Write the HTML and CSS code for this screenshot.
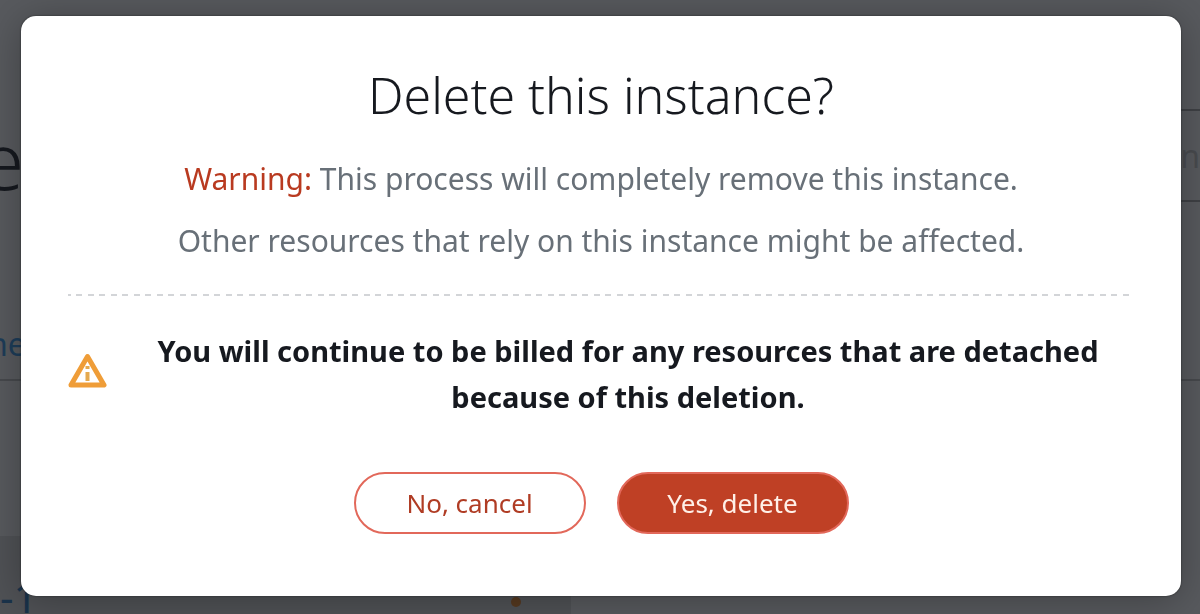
FILE: index.html
```
<!DOCTYPE html>
<html lang="en">
<head>
<meta charset="utf-8">
<title>Delete this instance?</title>
<link rel="stylesheet" href="styles.css">
</head>
<body>

<div class="page" aria-hidden="true">
  <div class="page-header">
    <span class="page-title">e</span>
    <span class="page-action">on</span>
  </div>
  <div class="page-tabs"><span>ne</span></div>
  <div class="page-space"></div>
  <div class="page-panel">
    <span class="page-count">-1</span>
    <i class="status-dot"></i>
  </div>
</div>

<div class="overlay">
  <div class="modal" role="dialog" aria-modal="true" aria-labelledby="modal-title">
    <h1 id="modal-title">Delete this instance?</h1>
    <p class="text"><span class="warning">Warning:</span> This process will completely remove this instance.</p>
    <p class="text">Other resources that rely on this instance might be affected.</p>

    <svg class="divider" aria-hidden="true"><line x1="0" y1="1" x2="100%" y2="1"/></svg>

    <div class="notice">
      <svg class="notice-icon" viewBox="0 0 40 38" aria-hidden="true">
        <path d="M19.500 4.500 L36 33 H3 Z"/>
        <rect x="17.500" y="14" width="4" height="3"/>
        <rect x="17.500" y="20" width="4" height="9"/>
      </svg>
      <p>You will continue to be billed for any resources that are detached because of this deletion.</p>
    </div>

    <div class="buttons">
      <button type="button" class="button">No, cancel</button>
      <button type="button" class="button button-danger">Yes, delete</button>
    </div>
  </div>
</div>

</body>
</html>
```

FILE: styles.css
```
* {
  box-sizing: border-box;
}

body {
  margin: 0;
  background: #585a5e;
  font-family: "Noto Sans", "Open Sans", sans-serif;
  color: #16191f;
}

h1, p {
  margin: 0;
}

/* page behind the dialog */
.page {
  height: 100vh;
  overflow: hidden;
}

.page-header {
  display: flex;
  justify-content: space-between;
  align-items: center;
  margin-top: 109px;
  height: 93px;
}

.page-title {
  margin-left: -20px;
  padding-top: 6px;
  font-size: 80px;
  font-weight: 300;
  line-height: 92px;
}

.page-action {
  width: 400px;
  border: 2px solid #3f4145;
  border-right: 0;
  color: #494b4f;
  font-size: 32px;
  line-height: 89px;
  text-align: right;
}

.page-tabs {
  height: 179px;
  padding-top: 120px;
  border-bottom: 2px solid #47494d;
  color: #1d3d59;
  font-size: 32px;
  line-height: 44px;
}

.page-tabs span {
  margin-left: -12px;
}

.page-space {
  height: 155px;
}

.page-panel {
  display: flex;
  justify-content: space-between;
  align-items: center;
  width: 571px;
  height: 132px;
  padding-right: 50px;
  background: #505256;
  color: #1a334b;
}

.page-count {
  padding-bottom: 12px;
  font-size: 42px;
}

.status-dot {
  width: 10px;
  height: 10px;
  border-radius: 50%;
  background: #573a20;
}

/* dialog */
.overlay {
  position: fixed;
  inset: 0;
  padding: 16px 19px 18px 21px;
}

.modal {
  padding: 43px 47px 62px;
  border-radius: 15px;
  background: #fff;
  box-shadow: 0 0 2px #202224, 0 4px 40px rgba(0, 0, 0, 0.3);
  text-align: center;
}

h1 {
  margin-bottom: 25px;
  font-size: 50px;
  font-weight: 300;
  line-height: 72px;
}

.text {
  margin-bottom: 16px;
  color: #687078;
  font-size: 30px;
  line-height: 46px;
}

.warning {
  color: #b93a20;
}

.divider {
  display: block;
  width: 100%;
  height: 2px;
  margin-top: 30px;
}

.divider line {
  stroke: #d3d5d8;
  stroke-width: 2;
  stroke-dasharray: 6 5 6 6;
  stroke-dashoffset: 3;
}

.notice {
  display: flex;
  align-items: flex-start;
  margin-top: 32px;
}

.notice-icon {
  flex: none;
  width: 40px;
  height: 38px;
  margin-top: 24px;
}

.notice-icon path {
  fill: none;
  stroke: #ef9d38;
  stroke-width: 5;
  stroke-linejoin: round;
}

.notice-icon rect {
  fill: #e5a94f;
}

.notice p {
  flex: 1;
  padding: 0 32px 0 46px;
  font-size: 29px;
  font-weight: 700;
  line-height: 46px;
}

.buttons {
  display: flex;
  justify-content: center;
  gap: 31px;
  margin-top: 52px;
}

.button {
  width: 232px;
  height: 62px;
  border: 2px solid #e2685a;
  border-radius: 31px;
  background: #fff;
  color: #b03c24;
  font-family: inherit;
  font-size: 26px;
}

.button-danger {
  background: #bf4025;
  color: #fff0e8;
}
```
